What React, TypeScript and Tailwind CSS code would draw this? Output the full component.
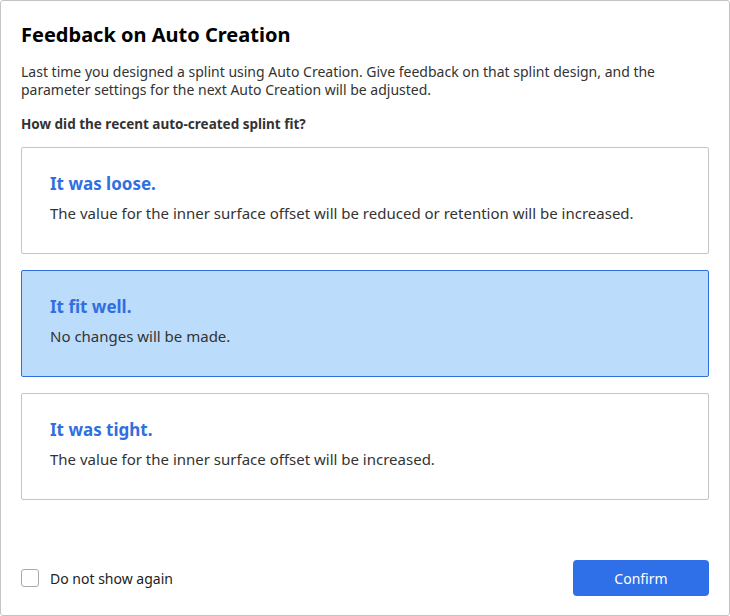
const options = [
  { title: 'It was loose.', text: 'The value for the inner surface offset will be reduced or retention will be increased.', selected: false },
  { title: 'It fit well.', text: 'No changes will be made.', selected: true },
  { title: 'It was tight.', text: 'The value for the inner surface offset will be increased.', selected: false },
];

const App: React.FC = () => {
  return (
    <div className="w-[730px] h-[616px] bg-white" style={{ fontFamily: '"Noto Sans", sans-serif' }}>
      <div className="h-full border border-[#c4c4c4] rounded-[3px] px-[20px] pt-[20px] pb-[19px] flex flex-col">
        <h1 className="text-[20px] leading-[28px] font-bold text-black">Feedback on Auto Creation</h1>
        <p className="mt-[14px] text-[14px] leading-[18px] text-[#333]">
          Last time you designed a splint using Auto Creation. Give feedback on that splint design, and the parameter settings for the next Auto Creation will be adjusted.
        </p>
        <p className="mt-[16px] text-[13.5px] leading-[18px] font-bold text-[#333]">How did the recent auto-created splint fit?</p>
        <div className="mt-[14px] flex flex-col gap-[16px]">
          {options.map((o) => (
            <div
              key={o.title}
              className={
                o.selected
                  ? 'h-[107px] rounded-[2px] border border-[#2f6fe0] bg-[#bcdcfc] px-[28px] pt-[24px]'
                  : 'h-[107px] rounded-[2px] border border-[#c4c4c4] bg-white px-[28px] pt-[24px]'
              }
            >
              <div className="text-[17px] leading-[24px] font-bold text-[#2f6fe0]">{o.title}</div>
              <div className="mt-[7px] text-[15px] leading-[20px] text-[#333]">{o.text}</div>
            </div>
          ))}
        </div>
        <div className="mt-auto flex items-center justify-between">
          <label className="flex items-center gap-[11px] text-[14px] text-[#222]">
            <span className="w-[18px] h-[18px] border border-[#aaa] rounded-[3px] bg-white" />
            Do not show again
          </label>
          <button className="w-[136px] h-[36px] rounded-[4px] bg-[#2f70e8] text-white text-[14px]">Confirm</button>
        </div>
      </div>
    </div>
  );
};

export default App;
